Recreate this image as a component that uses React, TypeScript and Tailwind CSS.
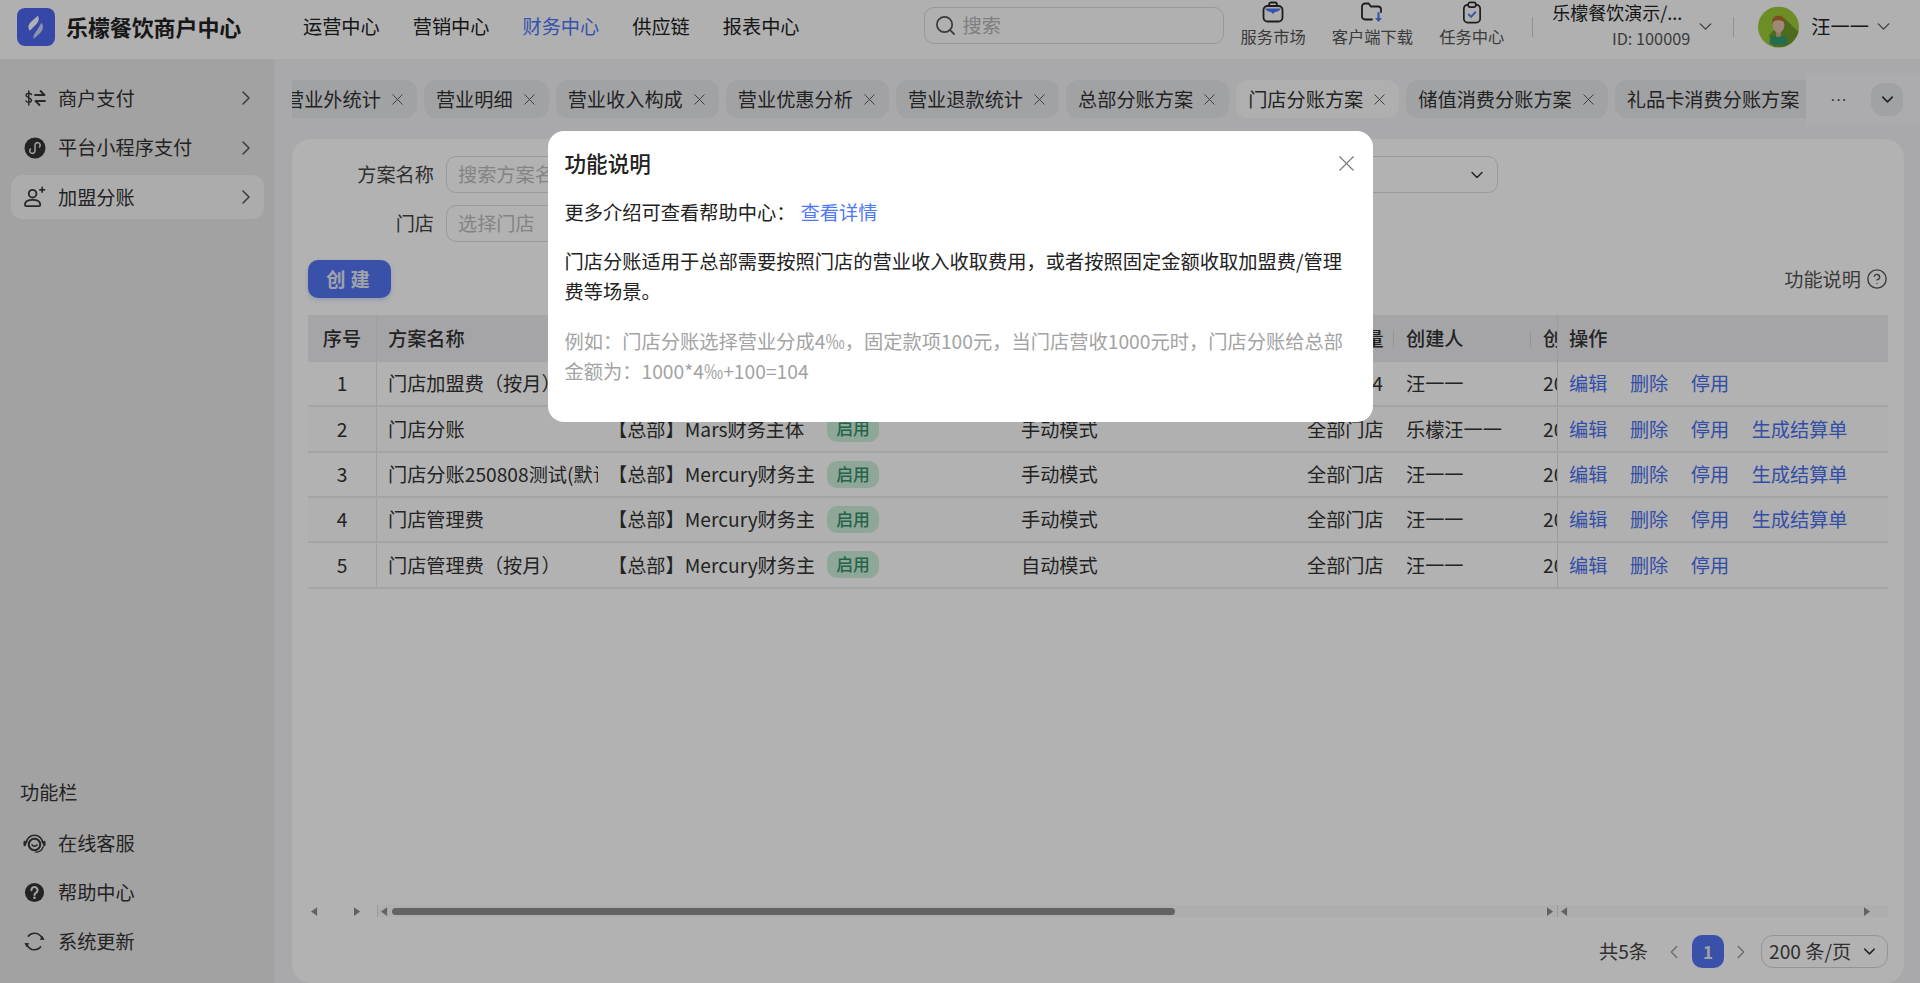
import React from "react";
import { ChevronRight, ChevronLeft, ChevronDown, X, Search, CircleHelp } from "lucide-react";

const font = { fontFamily: '"Noto Sans CJK SC","Noto Sans",sans-serif' };

const Logo = () => (
  <div className="flex h-[38px] w-[38px] shrink-0 items-center justify-center rounded-[8px] bg-[#4c68f0]">
    <svg viewBox="0 0 24 24" className="h-[30px] w-[30px]">
      <path d="M13.500 3 C15 6 14 8 11 11 L7 15 C5 12 6 9.500 9 7 Z" fill="#ffffff" />
      <path d="M16.500 8.500 C18.500 12 17.500 15 14.500 17.500 L10 21.500 C9.800 19 10.500 17.500 12.500 15 Z" fill="#c9d3fb" />
    </svg>
  </div>
);

const BagIcon = () => (
  <svg viewBox="0 0 22 22" className="h-[22px] w-[22px]" fill="none" stroke="#2a2a2a" strokeWidth="1.800">
    <rect x="1.500" y="5" width="19" height="15.500" rx="4" />
    <path d="M7 5V3.500a2 2 0 0 1 2-2h4a2 2 0 0 1 2 2V5" />
    <path d="M3 7.500h16c-1 2.500-4.500 3.500-6 3.600L11 13l-2-1.900C7.500 11 4 10 3 7.500z" fill="#4e78f6" stroke="none" />
  </svg>
);
const FolderIcon = () => (
  <svg viewBox="0 0 24 22" className="h-[22px] w-[24px]" fill="none" stroke="#2a2a2a" strokeWidth="1.800" strokeLinecap="round">
    <path d="M12 18.500H5a3 3 0 0 1-3-3v-10a3 3 0 0 1 3-3h3.500l2.500 3h7a3 3 0 0 1 3 3V11" />
    <path d="M18.500 12v6" stroke="#4e78f6" strokeWidth="2.200" />
    <path d="M15 17h7l-3.500 4z" fill="#4e78f6" stroke="none" />
  </svg>
);
const ClipIcon = () => (
  <svg viewBox="0 0 20 24" className="h-[23px] w-[20px]" fill="none" stroke="#2a2a2a" strokeWidth="1.800">
    <rect x="1.500" y="4" width="17" height="18.500" rx="4" />
    <rect x="6" y="1.500" width="8" height="5" rx="2" fill="#fcfcfd" />
    <path d="M6 13.500l3 3 5-5.500" stroke="#4e78f6" strokeWidth="2" />
  </svg>
);

const PayIcon = () => (
  <svg viewBox="0 0 22 20" className="h-[20px] w-[22px]" fill="none" stroke="#3a3a3a" strokeWidth="1.700" strokeLinecap="round" strokeLinejoin="round">
    <path d="M7.500 6.500C7 4.800 2.500 4.500 2 7c-.3 2.800 5.600 2.400 5.500 5.500-.2 2.300-4.600 2.200-5.500.500M4.800 3v14" strokeWidth="1.500" />
    <path d="M11 7h9.500L16.500 3M21 13h-9.500l4 4" strokeWidth="1.800" />
  </svg>
);
const MiniIcon = () => (
  <svg viewBox="0 0 22 22" className="h-[22px] w-[22px]">
    <circle cx="11" cy="11" r="10.500" fill="#333" />
    <path d="M6.500 12a2.600 2.600 0 1 0 4.500 2V8a2.600 2.600 0 1 1 4.500 2" fill="none" stroke="#e9e9e9" strokeWidth="1.500" strokeLinecap="round" />
  </svg>
);
const UserPlusIcon = () => (
  <svg viewBox="0 0 24 24" className="h-[24px] w-[23px]" fill="none" stroke="#3a3a3a" strokeWidth="1.900" strokeLinecap="round">
    <circle cx="10" cy="8.500" r="4" />
    <path d="M2 20c0-3.500 3-5 8-5s8 1.500 8 5c0 1-.5 1.500-1.500 1.500h-13C2.500 21.500 2 21 2 20z" />
    <path d="M17.500 4.500h5M20 2v5" strokeWidth="1.700" />
  </svg>
);
const ServiceIcon = () => (
  <svg viewBox="0 0 24 24" className="h-[23px] w-[23px]" fill="none" stroke="#3a3a3a" strokeLinecap="round">
    <path d="M3.500 11.500a8.500 8 0 0 1 17 0" strokeWidth="1.600" />
    <path d="M1.800 10.500v3M22.200 10.500v3" strokeWidth="2.600" />
    <path d="M21 15.500c-1 3.500-4.500 5.500-8 5.500" strokeWidth="1.500" />
    <circle cx="12" cy="13" r="6" strokeWidth="2.200" />
    <path d="M9.500 13.500c1 1.800 4 1.800 5 0" strokeWidth="1.800" />
  </svg>
);
const HelpIcon = () => (
  <svg viewBox="0 0 22 22" className="h-[21px] w-[21px]">
    <circle cx="11" cy="11" r="10" fill="#333" />
    <path d="M7.800 8.500a3.200 3.200 0 1 1 5 2.600c-1.200.8-1.800 1.200-1.800 2.400" fill="none" stroke="#e9e9e9" strokeWidth="2.200" strokeLinecap="round" />
    <circle cx="11" cy="16.500" r="1.400" fill="#e9e9e9" />
  </svg>
);
const UpdateIcon = () => (
  <svg viewBox="0 0 24 24" className="h-[23px] w-[23px]" fill="none" stroke="#3a3a3a" strokeWidth="1.600" strokeLinecap="round">
    <path d="M5.500 6.500C9 2 16.500 2.200 19.500 8" />
    <path d="M18.500 17.500C15 22 7.500 21.800 4.500 16" />
    <path d="M22.500 10.500l-5-.2 2.800-4.300z" fill="#3a3a3a" stroke="none" />
    <path d="M1.500 13.500l5 .2-2.800 4.300z" fill="#3a3a3a" stroke="none" />
  </svg>
);

const Avatar = () => (
  <svg viewBox="0 0 42 42" className="h-[42px] w-[41px] shrink-0">
    <clipPath id="a"><circle cx="21" cy="21" r="21" /></clipPath>
    <g clipPath="url(#a)">
      <rect width="42" height="42" fill="#9ccb38" />
      <path d="M27 12 L42 26 L42 42 L16 42 L11 30 Z" fill="#6f9a2c" />
      <path d="M12 36c0-5 3-6 9-6s9 1 9 6v3H12z" fill="#2e9e72" />
      <rect x="18.500" y="24" width="5" height="7" fill="#cfae96" />
      <ellipse cx="21" cy="19" rx="6" ry="8" fill="#e3c4ab" />
      <path d="M14.500 18c-1-6 2.500-8.500 6.500-8.500s7.500 2.500 6.500 8.500c-1-3-3-4-6.500-4-4 0-5.500 1-6.500 4z" fill="#b3702b" />
    </g>
  </svg>
);

const HeaderTool = ({ icon, label, cls = "" }: { icon: React.ReactNode; label: string; cls?: string }) => (
  <div className={`flex flex-col items-center whitespace-nowrap ${cls}`}>
    <div className="flex h-[24px] items-center">{icon}</div>
    <span className="mt-[2px]">{label}</span>
  </div>
);

const Header = () => (
  <header className="flex h-[59px] shrink-0 items-center bg-[#fcfcfd] pb-[6px] text-[#222]">
    <div className="ml-[17px] flex w-[286px] items-center gap-[11px]">
      <Logo />
      <span className="whitespace-nowrap text-[22px] font-bold tracking-[-0.1px]">乐檬餐饮商户中心</span>
    </div>
    <nav className="flex gap-[33px] text-[19.200px]">
      <span>运营中心</span>
      <span>营销中心</span>
      <span className="text-[#4e78f6]">财务中心</span>
      <span>供应链</span>
      <span>报表中心</span>
    </nav>
    <div className="ml-[124px] mb-[2px] flex h-[37px] w-[300px] items-center gap-[6px] rounded-[10px] border border-[#d9d9d9] pl-[9px] text-[19.200px] text-[#b5b5b5]">
      <Search size={23} className="text-[#555]" strokeWidth={1.800} />
      <span>搜索</span>
    </div>
    <div className="mb-[7px] ml-[17px] flex items-start text-[16.300px] leading-[20px] text-[#555]">
      <HeaderTool icon={<BagIcon />} label="服务市场" />
      <HeaderTool icon={<FolderIcon />} label="客户端下载" cls="ml-[26px]" />
      <HeaderTool icon={<ClipIcon />} label="任务中心" cls="ml-[26px]" />
    </div>
    <div className="ml-[28px] h-[20px] w-px bg-[#d0d0d0]" />
    <div className="ml-[19px] flex w-[138px] flex-col items-end pb-[4px]">
      <span className="self-start whitespace-nowrap text-[18px] leading-[24px]">乐檬餐饮演示/...</span>
      <span className="mt-[3px] text-[16.300px] leading-[22px] text-[#555]">ID: 100009</span>
    </div>
    <ChevronDown size={21} strokeWidth={1.500} className="ml-[5px] text-[#555]" />
    <div className="ml-[17px] h-[20px] w-px bg-[#d0d0d0]" />
    <div className="ml-[24px]"><Avatar /></div>
    <span className="ml-[12px] whitespace-nowrap text-[19.200px]">汪一一</span>
    <ChevronDown size={21} strokeWidth={1.500} className="ml-[4px] text-[#555]" />
  </header>
);

const SideItem = ({ icon, label, active, chevron }: { icon: React.ReactNode; label: string; active?: boolean; chevron?: boolean }) => (
  <div className={`flex h-[44px] items-center rounded-[12px] pl-[12px] pr-[6px] text-[19.200px] text-[#333] ${active ? "bg-[#f7f7f7]" : ""}`}>
    <span className="flex w-[23px] justify-center">{icon}</span>
    <span className="ml-[12px] flex-1 whitespace-nowrap">{label}</span>
    {chevron && <ChevronRight size={24} strokeWidth={1.500} className="text-[#555]" />}
  </div>
);

const Sidebar = () => (
  <aside className="flex w-[275px] shrink-0 flex-col justify-between bg-[#e9e9e9] px-[11px] pb-[20px] pt-[17px]">
    <div className="flex w-[253px] flex-col gap-[5.500px]">
      <SideItem icon={<PayIcon />} label="商户支付" chevron />
      <SideItem icon={<MiniIcon />} label="平台小程序支付" chevron />
      <SideItem icon={<UserPlusIcon />} label="加盟分账" chevron active />
    </div>
    <div className="flex flex-col">
      <div className="mb-[15px] pl-[9px] text-[19.200px] leading-[28px] text-[#333]">功能栏</div>
      <div className="flex flex-col gap-[5px]">
        <SideItem icon={<ServiceIcon />} label="在线客服" />
        <SideItem icon={<HelpIcon />} label="帮助中心" />
        <SideItem icon={<UpdateIcon />} label="系统更新" />
      </div>
    </div>
  </aside>
);

const tabs = ["营业外统计", "营业明细", "营业收入构成", "营业优惠分析", "营业退款统计", "总部分账方案", "门店分账方案", "储值消费分账方案", "礼品卡消费分账方案"];

const Tabs = () => (
  <div className="mt-[14px] -mr-[16px] flex h-[52px] shrink-0 items-center">
    <div className="flex h-full w-[1514px] items-center overflow-hidden">
      <div className="-ml-[19px] flex gap-[7px]">
        {tabs.map((t) => {
          const active = t === "门店分账方案";
          return (
            <div key={t} className={`flex h-[38px] shrink-0 items-center whitespace-nowrap rounded-[12px] pl-[12px] pr-[10px] text-[19.200px] text-[#333] ${active ? "bg-[#fbfbfb]" : "bg-[#e7e8eb]"}`}>
              <span>{t}</span>
              <X size={19} strokeWidth={1.200} className="ml-[7px] text-[#555]" />
            </div>
          );
        })}
      </div>
    </div>
    <div className="flex h-full flex-1 items-center bg-[#f6f7f9]">
      <span className="ml-[24px] w-[41px] font-['Liberation_Sans'] text-[17px] leading-none text-[#444]">···</span>
      <div className="flex h-[33px] w-[32px] items-center justify-center rounded-[12px] bg-[#e7e8eb]">
        <ChevronDown size={19} strokeWidth={2.200} className="text-[#333]" />
      </div>
    </div>
  </div>
);

const cols = [
  "w-[68px] justify-center",
  "w-[222px] pl-[11px] border-l border-[#e6e6e6]",
  "w-[411px] pl-[10px]",
  "w-[286px] pl-[12px]",
  "w-[99px] pl-[12px]",
  "w-[137px] pl-[12px]",
  "w-[26px] pl-[12px]",
];

type Row = { no: number; name: string; subject: string; mode: string; store: React.ReactNode; by: string; settle: boolean };
const rows: Row[] = [
  { no: 1, name: "门店加盟费（按月）", subject: "【总部】Mercury财务主体", mode: "手动模式", store: <span className="block w-[76px] text-right">4</span>, by: "汪一一", settle: false },
  { no: 2, name: "门店分账", subject: "【总部】Mars财务主体", mode: "手动模式", store: "全部门店", by: "乐檬汪一一", settle: true },
  { no: 3, name: "门店分账250808测试(默认)", subject: "【总部】Mercury财务主体", mode: "手动模式", store: "全部门店", by: "汪一一", settle: true },
  { no: 4, name: "门店管理费", subject: "【总部】Mercury财务主体", mode: "手动模式", store: "全部门店", by: "汪一一", settle: true },
  { no: 5, name: "门店管理费（按月）", subject: "【总部】Mercury财务主体", mode: "自动模式", store: "全部门店", by: "汪一一", settle: false },
];

const Cell = ({ cls, children }: { cls: string; children?: React.ReactNode }) => (
  <div className={`flex h-full shrink-0 items-center overflow-hidden whitespace-nowrap ${cls}`}>{children}</div>
);

const Sep = () => <span className="absolute right-0 top-1/2 h-[16px] w-px -translate-y-1/2 bg-[#d4d4d4]" />;

const Table = () => (
  <div className="mt-[17px] flex flex-1 flex-col text-[19.200px] text-[#333]">
    <div className="flex h-[47px] shrink-0 items-center bg-[#ecedf0] font-medium">
      <Cell cls={cols[0]}>序号</Cell>
      <Cell cls={cols[1]}>方案名称</Cell>
      <Cell cls={cols[2]}>财务主体</Cell>
      <Cell cls={cols[3]}>结算模式</Cell>
      <Cell cls={`${cols[4]} relative`}>门店数量<Sep /></Cell>
      <Cell cls={`${cols[5]} relative`}>创建人<Sep /></Cell>
      <Cell cls={cols[6]}>创建时间</Cell>
      <div className="flex h-full flex-1 items-center border-l border-[#dedede] pl-[11px]">操作</div>
    </div>
    {rows.map((r) => (
      <div key={r.no} className={`flex h-[45.330px] shrink-0 items-center border-b-2 border-[#ebebeb] ${r.no % 2 === 0 ? "bg-[#fcfcfc]" : "bg-white"}`}>
        <Cell cls={cols[0]}>{r.no}</Cell>
        <Cell cls={`${cols[1]} pr-[4px]`}>{r.name}</Cell>
        <Cell cls={cols[2]}>
          <span className="mr-[13px] block w-[206px] overflow-hidden whitespace-nowrap">{r.subject}</span>
          <span className="flex h-[27px] w-[52px] items-center justify-center rounded-[10px] bg-[#cdf0dc] text-[16.800px] font-medium text-[#368e6a]">启用</span>
        </Cell>
        <Cell cls={cols[3]}>{r.mode}</Cell>
        <Cell cls={cols[4]}>{r.store}</Cell>
        <Cell cls={cols[5]}>{r.by}</Cell>
        <Cell cls={cols[6]}>2025-08-08</Cell>
        <div className="flex h-full flex-1 items-center gap-[22.500px] border-l border-[#dedede] pl-[11px] text-[#4a70ee]">
          <span>编辑</span>
          <span>删除</span>
          <span>停用</span>
          {r.settle && <span>生成结算单</span>}
        </div>
      </div>
    ))}
  </div>
);

const Tri = ({ dir }: { dir: "l" | "r" }) => (
  <svg viewBox="0 0 8 10" className="h-[9px] w-[7px] shrink-0">
    <path d={dir === "l" ? "M7 0v10L0 5z" : "M0 0v10l7-5z"} fill="#8d8d8d" />
  </svg>
);

const ScrollBar = () => (
  <div className="flex h-[12px] shrink-0 items-center">
    <div className="flex h-full w-[69px] items-center pl-[3px]">
      <Tri dir="l" />
      <span className="w-[36px]" />
      <Tri dir="r" />
    </div>
    <div className="h-full w-px bg-[#ddd]" />
    <div className="flex h-full w-[1179px] items-center bg-[#fafafa] pl-[3px] pr-[3px]">
      <Tri dir="l" />
      <div className="ml-[3.500px] h-[7px] w-[783px] rounded-full bg-[#8f8f8f]" />
      <div className="flex-1" />
      <Tri dir="r" />
    </div>
    <div className="h-full w-px bg-[#ddd]" />
    <div className="flex h-full flex-1 items-center justify-between bg-[#fafafa] pl-[3px] pr-[17px]">
      <Tri dir="l" />
      <Tri dir="r" />
    </div>
  </div>
);

const Pagination = () => (
  <div className="mt-[18px] flex h-[33px] shrink-0 items-center justify-end text-[19.200px] text-[#444]">
    <span>共5条</span>
    <ChevronLeft size={22} strokeWidth={1.400} className="ml-[15px] text-[#999]" />
    <span className="ml-[7px] flex h-[33px] w-[32px] items-center justify-center rounded-[10px] bg-[#5375f4] text-[17px] font-semibold text-[#e8e8e8]">1</span>
    <ChevronRight size={22} strokeWidth={1.400} className="ml-[6px] text-[#999]" />
    <div className="ml-[9px] flex h-[33px] w-[127px] items-center justify-between rounded-[12px] border border-[#d4d4d4] pl-[7px] pr-[8px]">
      <span className="whitespace-nowrap">200 条/页</span>
      <ChevronDown size={19} strokeWidth={1.800} className="text-[#333]" />
    </div>
  </div>
);

const Card = () => (
  <section className="mt-[14px] flex min-h-0 flex-1 flex-col rounded-[19px] bg-white px-[16px] pb-[15px] pt-[17px] text-[19.200px]">
    <div className="flex h-[37px] shrink-0 items-center">
      <span className="w-[126px] text-right text-[#444]">方案名称</span>
      <div className="ml-[12px] flex h-[37px] w-[300px] items-center rounded-[10px] border border-[#dcdcdc] pl-[11px] text-[#bdbdbd]">搜索方案名称</div>
      <div className="ml-[302px] flex h-[37px] w-[450px] items-center justify-end rounded-[10px] border border-[#dcdcdc] pr-[10px]">
        <ChevronDown size={20} strokeWidth={1.800} className="text-[#333]" />
      </div>
    </div>
    <div className="mt-[12px] flex h-[37px] shrink-0 items-center">
      <span className="w-[126px] text-right text-[#444]">门店</span>
      <div className="ml-[12px] flex h-[37px] w-[300px] items-center rounded-[10px] border border-[#dcdcdc] pl-[11px] text-[#bdbdbd]">选择门店</div>
    </div>
    <div className="mt-[18px] flex h-[38px] shrink-0 items-center justify-between">
      <button className="h-[38px] w-[83px] rounded-[10px] bg-[#5375f4] pl-[2px] text-[19.200px] font-semibold tracking-[5px] text-[#e6e9f5] shadow-[0_2px_4px_rgba(83,117,244,0.25)]">创建</button>
      <div className="flex items-center gap-[5px] text-[#555]">
        <span>功能说明</span>
        <CircleHelp size={22} strokeWidth={1.500} />
      </div>
    </div>
    <Table />
    <ScrollBar />
    <Pagination />
  </section>
);

const Modal = () => (
  <div className="fixed inset-0 flex justify-center bg-black/30 pt-[131px]">
    <div className="relative h-[291px] w-[825px] rounded-[16px] bg-white px-[17px] pt-[17px] text-[19.260px] leading-[30px] text-[#222]">
      <div className="text-[21.600px] font-medium">功能说明</div>
      <X size={27} strokeWidth={1} className="absolute right-[12.500px] top-[18.500px] text-[#777]" />
      <div className="mt-[19px]">
        更多介绍可查看帮助中心：<span className="ml-[5px] text-[#4e78f6]">查看详情</span>
      </div>
      <p className="mt-[19px]">门店分账适用于总部需要按照门店的营业收入收取费用，或者按照固定金额收取加盟费/管理费等场景。</p>
      <p className="mt-[20px] text-[#a3a3a3]">例如：门店分账选择营业分成4‰，固定款项100元，当门店营收1000元时，门店分账给总部金额为：1000*4‰+100=104</p>
    </div>
  </div>
);

export default function App() {
  return (
    <div className="flex h-screen w-full flex-col overflow-hidden bg-[#f2f3f7]" style={font}>
      <Header />
      <div className="flex min-h-0 flex-1">
        <Sidebar />
        <main className="flex min-w-0 flex-1 flex-col pl-[17px] pr-[16px]">
          <Tabs />
          <Card />
        </main>
      </div>
      <Modal />
    </div>
  );
}
